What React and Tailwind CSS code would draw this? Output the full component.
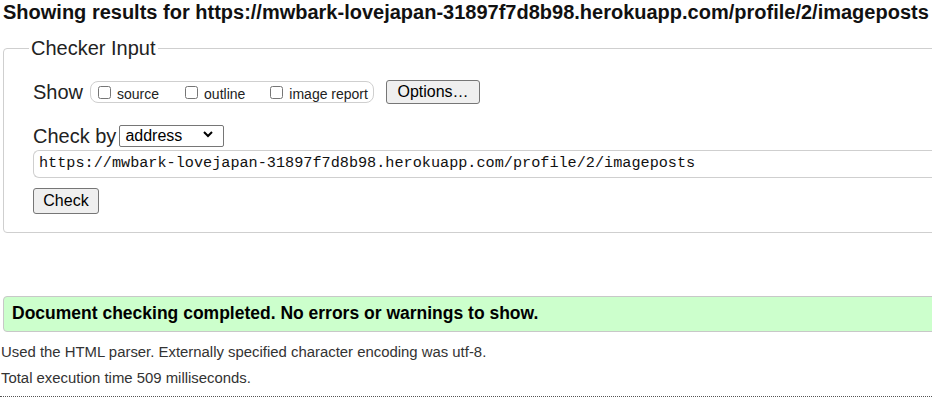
import React from "react";

const url = "https://mwbark-lovejapan-31897f7d8b98.herokuapp.com/profile/2/imageposts";

const Box = ({ label, className }) => (
  <label className={"flex items-center " + className}>
    <input type="checkbox" className="m-0 h-[13px] w-[13px]" />
    <span className="ml-[6px] text-[14px] leading-none mt-[3px]">{label}</span>
  </label>
);

export default function App() {
  return (
    <div className="w-full h-screen overflow-hidden bg-white text-[#222] font-['Liberation_Sans',Arial,sans-serif]">
      <div className="w-[980px] pl-[3px]">
        <h2 className="text-[20px] font-bold leading-[22px] text-[#111] pt-[1px]">
          Showing results for {url}
        </h2>

        {/* checker form */}
        <fieldset className="mt-[14px] border border-[#cfcfcf] rounded-[4px] pl-[29px] pr-4 pb-[18px] pt-[20px]">
          <legend className="ml-[-4px] px-[2px] text-[20px] leading-[23px] text-[#222]">Checker Input</legend>

          <div className="flex items-center h-[24px]">
            <span className="text-[20px] leading-none text-[#222]">Show</span>
            <div className="ml-[7px] h-[22px] w-[284px] border border-[#cfcfcf] rounded-[8px] flex items-center pl-[7px]">
              <Box label="source" />
              <Box label="outline" className="ml-[26px]" />
              <Box label="image report" className="ml-[25px]" />
            </div>
            <button className="ml-[12px] h-[24px] w-[94px] border border-[#767676] bg-[#efefef] rounded-[3px] text-[16px] leading-none text-black">
              Options…
            </button>
          </div>

          <div className="flex items-center mt-[21px] h-[22px]">
            <span className="text-[20px] leading-none text-[#222]">Check by</span>
            <div className="relative ml-[3px]">
              <select className="appearance-none h-[22px] w-[105px] border border-[#767676] rounded-[2px] pl-[5px] text-[16px] leading-none text-black bg-white">
                <option>address</option>
              </select>
              <svg className="absolute right-[11px] top-[7px] pointer-events-none" width="10" height="7" viewBox="0 0 10 7">
                <path d="M1 1 L5 5 L9 1" fill="none" stroke="#000" strokeWidth="2" />
              </svg>
            </div>
          </div>

          <div className="mt-[3px] h-[28px] border border-[#cfcfcf] rounded-l-[6px] border-r-0 flex items-center pl-[5px] w-[960px]">
            <span className="font-['Liberation_Mono','DejaVu_Sans_Mono',monospace] text-[15.2px] leading-none text-[#111]">{url}</span>
          </div>

          <button className="mt-[10px] h-[26px] w-[66px] border border-[#767676] bg-[#efefef] rounded-[3px] text-[16px] leading-none text-black">
            Check
          </button>
        </fieldset>

        {/* result */}
        <div className="mt-[63px] h-[36px] border border-[#c8c8c8] rounded-[4px] bg-[#ccffcc] flex items-center pl-[8px]">
          <p className="text-[17.5px] font-bold text-black leading-none">
            Document checking completed. No errors or warnings to show.
          </p>
        </div>

        <p className="mt-[12px] text-[14.9px] leading-[16px] text-[#333] ml-[-2px]">
          Used the HTML parser. Externally specified character encoding was utf-8.
        </p>
        <p className="mt-[10px] text-[14.9px] leading-[16px] text-[#333] ml-[-2px]">
          Total execution time 509 milliseconds.
        </p>
        <div className="mt-[10px] ml-[-3px] border-t border-dotted border-[#555]" />
      </div>
    </div>
  );
}
